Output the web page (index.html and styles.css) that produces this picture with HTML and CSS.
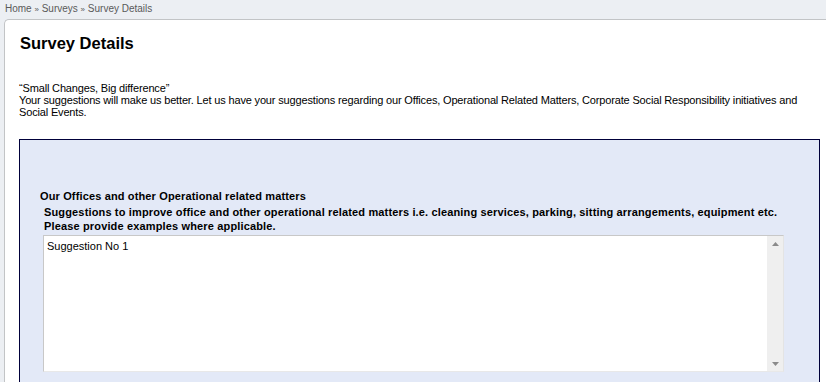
FILE: index.html
```html
<!DOCTYPE html>
<html>
<head>
<meta charset="utf-8">
<link rel="stylesheet" href="styles.css">
</head>
<body>
<div class="crumbs">Home <span class="sep">»</span> Surveys <span class="sep">»</span> Survey Details</div>
<div class="card">
  <h1 class="title">Survey Details</h1>
  <div class="intro">
    <div>“Small Changes, Big difference”</div>
    <div>Your suggestions will make us better. Let us have your suggestions regarding our Offices, Operational Related Matters, Corporate Social Responsibility initiatives and Social Events.</div>
  </div>
  <div class="panel">
    <div class="q-title">Our Offices and other Operational related matters</div>
    <div class="q-desc">Suggestions to improve office and other operational related matters i.e. cleaning services, parking, sitting arrangements, equipment etc.<br>Please provide examples where applicable.</div>
    <div class="answer">
      <div class="answer-text">Suggestion No 1</div>
      <div class="scrollbar">
        <svg class="arrow" width="7" height="4" viewBox="0 0 7 4"><path d="M0 4 L3.5 0 L7 4 Z" fill="#8a8a8a"/></svg>
        <svg class="arrow" width="7" height="4" viewBox="0 0 7 4"><path d="M0 0 L3.5 4 L7 0 Z" fill="#8a8a8a"/></svg>
      </div>
    </div>
  </div>
</div>
</body>
</html>
```
FILE: styles.css
```css
html, body {
  margin: 0;
  padding: 0;
  background: #eceff3;
  overflow: hidden;
}
body {
  font-family: "Liberation Sans", Arial, sans-serif;
  width: 826px;
  height: 382px;
}
.crumbs {
  height: 19px;
  box-sizing: border-box;
  padding: 3px 0 0 5px;
  font-size: 10px;
  color: #5a5a5a;
  line-height: 12px;
}
.crumbs .sep {
  font-size: 8px;
}
.card {
  margin-left: 4px;
  background: #fff;
  border-top: 1px solid #c2c4c6;
  border-left: 1px solid #c2c4c6;
  border-top-left-radius: 5px;
  padding: 0 6px 0 14px;
  height: 362px;
  overflow: hidden;
}
.title {
  margin: 0;
  padding: 14px 0 0 1px;
  font-size: 16.5px;
  line-height: 18px;
  font-weight: bold;
  color: #000;
}
.intro {
  margin-top: 30px;
  font-size: 11px;
  line-height: 12px;
  letter-spacing: -0.16px;
  color: #000;
}
.panel {
  margin-top: 21px;
  border: 1px solid #00003a;
  background: #e3e9f7;
  padding: 49px 35px 20px 20px;
  font-size: 11px;
  line-height: 14px;
}
.q-title {
  font-weight: bold;
  letter-spacing: 0.14px;
}
.q-desc {
  font-weight: bold;
  letter-spacing: 0.15px;
  padding-left: 4px;
  line-height: 14px;
  margin-top: 2px;
}
.answer {
  margin: 2px 0 0 3px;
  height: 135px;
  border: 1px solid #c8c8c8;
  border-right-color: #e4e4e4;
  border-bottom-color: #e8e8e8;
  background: #fff;
  display: flex;
}
.answer-text {
  flex: 1;
  padding: 4px 3px;
  font-size: 11px;
  line-height: 12px;
}
.scrollbar {
  width: 16px;
  background: #efefef;
  display: flex;
  flex-direction: column;
  justify-content: space-between;
  align-items: center;
  padding: 6px 0 5px;
}
.arrow {
  display: block;
}
```
